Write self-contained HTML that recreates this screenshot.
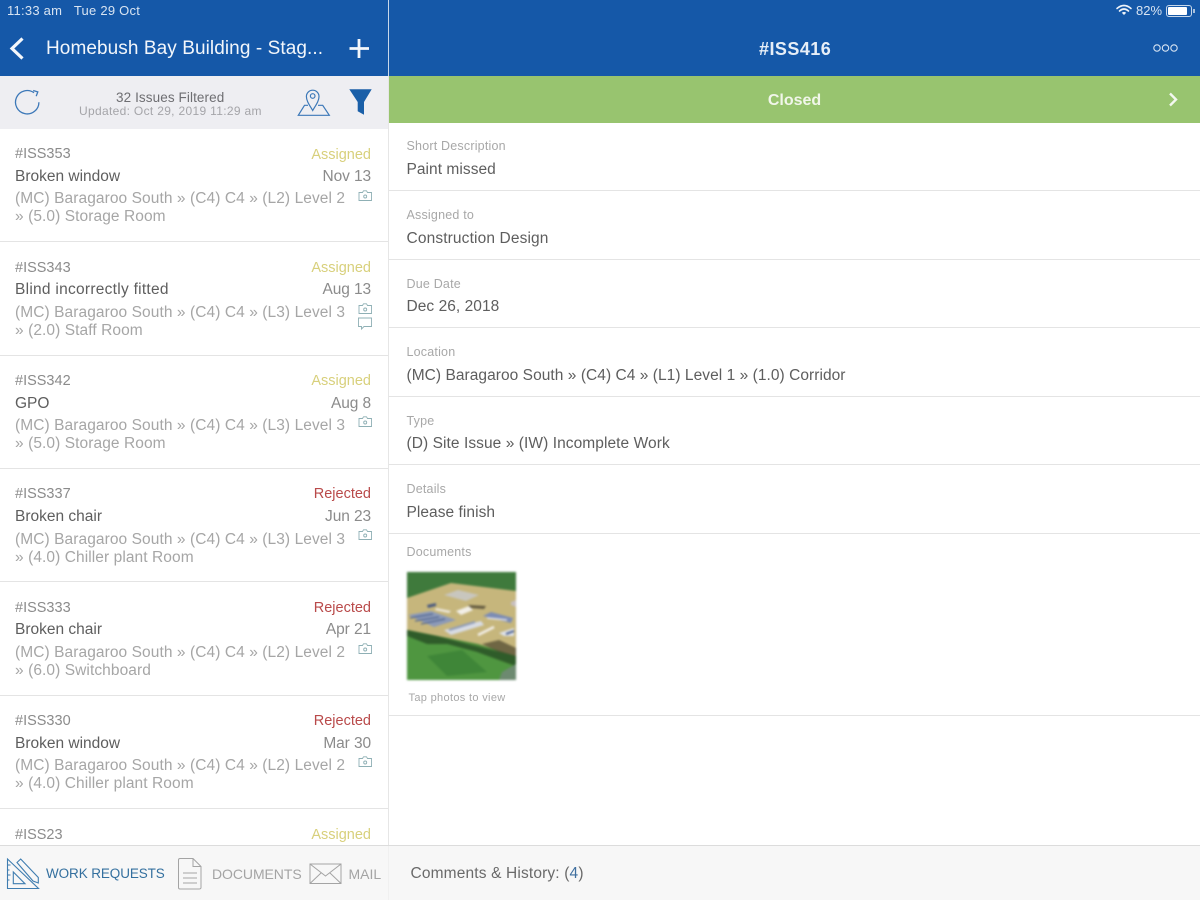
<!DOCTYPE html>
<html><head><meta charset="utf-8"><title>Issues</title>
<style>
*{margin:0;padding:0;box-sizing:border-box}
html,body{width:1200px;height:900px;overflow:hidden;background:#fff;font-family:"Liberation Sans",sans-serif}
.t{position:absolute;white-space:nowrap;line-height:20px}
.b{position:absolute;background:#e4e4e4;height:1px}
svg{position:absolute;overflow:visible}
.id{font-size:14.5px;color:#8b8b8b;left:15px}
.ti{font-size:15.5px;color:#5e5e5e;left:15px;margin-top:1px}
.dt{font-size:15.5px;color:#8b8b8b;right:829px;letter-spacing:-.1px;margin-top:1px}
.st{font-size:14.5px;right:829px}
.a{color:#d8d07c}.x{color:#b94a4a}
.lo{font-size:15.500px;color:#a6a6a6;left:15px;letter-spacing:.08px;margin-top:1px}
.lb{font-size:12.5px;color:#a8a8a8;left:406.5px;letter-spacing:.2px}
.v{font-size:15.5px;color:#5e5e5e;left:406.5px;letter-spacing:.05px;margin-top:1px}
</style></head><body>
<div style="position:absolute;left:0;top:0;width:1200px;height:76px;background:#1558a8"></div>
<div style="position:absolute;left:388px;top:0;width:1px;height:76px;background:#c8d8ea"></div>
<div style="position:absolute;left:0;top:76px;width:388px;height:53px;background:#eeeef2"></div>
<div style="position:absolute;left:389px;top:76px;width:811px;height:47px;background:#98c46f"></div>
<div style="position:absolute;left:388px;top:76px;width:1px;height:770px;background:#e6e6e6"></div>

<div class="t" style="left:7px;top:1px;font-size:13px;color:#d8e4f2;letter-spacing:.25px">11:33 am&nbsp;&nbsp;&nbsp;Tue 29 Oct</div>
<div class="t" style="left:46px;top:39px;font-size:19px;color:#f2f6fb;letter-spacing:.08px">Homebush Bay Building - Stag...</div>
<svg style="left:0;top:0" width="388" height="76" fill="none" stroke="#f4f7fb"><path d="M22.500 38.500L12 48.500L22.500 58.500" stroke-width="3.200"/><path d="M359 39V58M349.500 48.500H369" stroke-width="2.800"/></svg>
<div class="t" style="left:759px;top:38.500px;font-size:18px;font-weight:bold;color:#e6eef7;letter-spacing:.45px">#ISS416</div>
<svg style="left:1100px;top:0" width="100" height="76" fill="none" stroke="#d8e4f2" stroke-width="1.100"><circle cx="57" cy="48" r="3.200"/><circle cx="65.500" cy="48" r="3.200"/><circle cx="74" cy="48" r="3.200"/></svg>
<svg style="left:1116px;top:4px" width="16" height="13" fill="none" stroke="#eef3f9" stroke-linecap="round"><path d="M1 4.500Q8 -1.500 15 4.500" stroke-width="1.600"/><path d="M3.500 7Q8 3 12.500 7" stroke-width="1.600"/><path d="M8 11L5.800 8.800Q8 7 10.200 8.800Z" fill="#eef3f9" stroke="none"/></svg>
<div class="t" style="left:1136px;top:1px;font-size:13px;color:#d8e4f2">82%</div>
<div style="position:absolute;left:1166px;top:5px;width:26px;height:12px;border:1px solid #c8d8ea;border-radius:3px;padding:1px"><div style="width:19px;height:8px;background:#fff;border-radius:1px"></div></div>
<div style="position:absolute;left:1193px;top:9px;width:1.500px;height:4px;background:#a8c0dc"></div>

<div class="t" style="left:389px;width:811px;top:90.500px;font-size:16px;font-weight:bold;color:#f1f6ea;text-align:center">Closed</div>
<svg style="left:1165px;top:90px" width="16" height="20" fill="none" stroke="#f4f8f0" stroke-width="2.400"><path d="M5 3.500L11 9.500L5 15.500"/></svg>

<svg style="left:0;top:76px" width="388" height="53" fill="none">
<g transform="translate(.5,-.8)"><path d="M33.500 17.500A11.700 11.700 0 1 0 38.400 27" stroke="#3c78b8" stroke-width="1.300"/><path d="M32.700 15.300L37.300 16.700L35.700 21" stroke="#3c78b8" stroke-width="1.300"/></g>
<path d="M308 29.300H304.500L298.300 39.300H329.300L322.700 29.300H318" stroke="#3c78b8" stroke-width="1.200"/>
<path d="M312.700 34.500C309.500 29 306.400 25 306.400 20.500A6.300 6.300 0 0 1 319 20.500C319 25 315.900 29 312.700 34.500Z" stroke="#3c78b8" stroke-width="1.200" fill="#eeeef2"/><circle cx="312.700" cy="20" r="2.300" stroke="#3c78b8" stroke-width="1.200"/>
<path d="M349.300 13.300H371.700L364 26V38.700L357.700 35.300V26Z" fill="#1a5fa8"/></svg>
<div class="t" style="left:116px;top:88px;font-size:13.500px;color:#6e6e72;letter-spacing:.1px">32 Issues Filtered</div>
<div class="t" style="left:79px;top:101px;font-size:12px;color:#a5a5a9;letter-spacing:.32px">Updated: Oct 29, 2019 11:29 am</div>

<!-- list -->
<div class="t id" style="top:144px">#ISS353</div><div class="t st a" style="top:145px">Assigned</div>
<div class="t ti" style="top:166px">Broken window</div><div class="t dt" style="top:166px">Nov 13</div>
<div class="t lo" style="top:188px">(MC) Baragaroo South » (C4) C4 » (L2) Level 2</div><div class="t lo" style="top:206px">» (5.0) Storage Room</div>
<div class="b" style="left:0;top:241px;width:388px"></div>

<div class="t id" style="top:258px">#ISS343</div><div class="t st a" style="top:258px">Assigned</div>
<div class="t ti" style="top:279px;letter-spacing:.27px">Blind incorrectly fitted</div><div class="t dt" style="top:279px">Aug 13</div>
<div class="t lo" style="top:302px">(MC) Baragaroo South » (C4) C4 » (L3) Level 3</div><div class="t lo" style="top:320px">» (2.0) Staff Room</div>
<div class="b" style="left:0;top:355px;width:388px"></div>

<div class="t id" style="top:371px">#ISS342</div><div class="t st a" style="top:371px">Assigned</div>
<div class="t ti" style="top:393px">GPO</div><div class="t dt" style="top:393px">Aug 8</div>
<div class="t lo" style="top:415px">(MC) Baragaroo South » (C4) C4 » (L3) Level 3</div><div class="t lo" style="top:433px">» (5.0) Storage Room</div>
<div class="b" style="left:0;top:468px;width:388px"></div>

<div class="t id" style="top:484px">#ISS337</div><div class="t st x" style="top:484px">Rejected</div>
<div class="t ti" style="top:506px">Broken chair</div><div class="t dt" style="top:506px">Jun 23</div>
<div class="t lo" style="top:529px">(MC) Baragaroo South » (C4) C4 » (L3) Level 3</div><div class="t lo" style="top:547px">» (4.0) Chiller plant Room</div>
<div class="b" style="left:0;top:581px;width:388px"></div>

<div class="t id" style="top:598px">#ISS333</div><div class="t st x" style="top:598px">Rejected</div>
<div class="t ti" style="top:619px">Broken chair</div><div class="t dt" style="top:619px">Apr 21</div>
<div class="t lo" style="top:642px">(MC) Baragaroo South » (C4) C4 » (L2) Level 2</div><div class="t lo" style="top:660px">» (6.0) Switchboard</div>
<div class="b" style="left:0;top:695px;width:388px"></div>

<div class="t id" style="top:711px">#ISS330</div><div class="t st x" style="top:711px">Rejected</div>
<div class="t ti" style="top:733px">Broken window</div><div class="t dt" style="top:733px">Mar 30</div>
<div class="t lo" style="top:755px">(MC) Baragaroo South » (C4) C4 » (L2) Level 2</div><div class="t lo" style="top:773px">» (4.0) Chiller plant Room</div>
<div class="b" style="left:0;top:808px;width:388px"></div>

<div class="t id" style="top:825px">#ISS23</div><div class="t st a" style="top:825px">Assigned</div>

<svg width="0" height="0"><defs><g id="cam" fill="none" stroke="#8fb0b5" stroke-width=".9"><path d="M1 2.500H4.500L5.500 .8H8.500L9.500 2.500H13.500V10.500H1Z"/><circle cx="7.200" cy="6.500" r="1.500"/></g></defs></svg>
<svg style="left:358px;top:190px" width="14" height="12"><use href="#cam"/></svg>
<svg style="left:358px;top:303px" width="14" height="12"><use href="#cam"/></svg>
<svg style="left:358px;top:317px" width="14" height="14" fill="none" stroke="#8fb0b5" stroke-width=".9"><path d="M.5 1H13.500V9.500H6L3.500 12V9.500H.5Z"/></svg>
<svg style="left:358px;top:416px" width="14" height="12"><use href="#cam"/></svg>
<svg style="left:358px;top:529px" width="14" height="12"><use href="#cam"/></svg>
<svg style="left:358px;top:643px" width="14" height="12"><use href="#cam"/></svg>
<svg style="left:358px;top:756px" width="14" height="12"><use href="#cam"/></svg>

<!-- detail -->
<div class="t lb" style="top:136px">Short Description</div><div class="t v" style="top:159px">Paint missed</div><div class="b" style="left:389px;top:190px;width:811px"></div>
<div class="t lb" style="top:205px">Assigned to</div><div class="t v" style="top:228px;letter-spacing:.13px">Construction Design</div><div class="b" style="left:389px;top:259px;width:811px"></div>
<div class="t lb" style="top:274px">Due Date</div><div class="t v" style="top:296px">Dec 26, 2018</div><div class="b" style="left:389px;top:327px;width:811px"></div>
<div class="t lb" style="top:342px">Location</div><div class="t v" style="top:365px">(MC) Baragaroo South » (C4) C4 » (L1) Level 1 » (1.0) Corridor</div><div class="b" style="left:389px;top:396px;width:811px"></div>
<div class="t lb" style="top:411px">Type</div><div class="t v" style="top:433px;letter-spacing:.07px">(D) Site Issue » (IW) Incomplete Work</div><div class="b" style="left:389px;top:464px;width:811px"></div>
<div class="t lb" style="top:479px">Details</div><div class="t v" style="top:502px">Please finish</div><div class="b" style="left:389px;top:533px;width:811px"></div>
<div class="t lb" style="top:542px">Documents</div>

<svg style="left:407px;top:572px;filter:blur(1px)" width="109" height="108" viewBox="0 0 109 108">
<defs><clipPath id="c"><rect width="109" height="108"/></clipPath></defs>
<g clip-path="url(#c)">
<rect width="109" height="108" fill="#4c8a3a"/>
<path d="M0 0H109V20L44 11L0 26Z" fill="#3f7a3c"/>
<path d="M0 26L44 11L109 19V84L71 72L1 58H0Z" fill="#c6b67c"/>
<path d="M0 58L30 64L60 72L109 84V94L70 80L40 72L20 72L0 64Z" fill="#2f5c2a"/>
<path d="M40 72L70 80L109 95V108H0V64L20 72Z" fill="#4f9640"/>
<path d="M20 84L55 78L80 100L40 104Z" fill="#3f8638"/>
<path d="M95 100L109 92V108H92Z" fill="#6d8a70"/>
<path d="M1 43L24 39L49 48L27 55Z" fill="#8c9ab8"/>
<path d="M3 46L26 42M8 49L32 45M14 52L38 47" stroke="#4f648e" stroke-width="1.300" fill="none"/>
<path d="M37 58L74 49L77 53L44 63Z" fill="#d8dce4"/>
<path d="M42 58L68 50" stroke="#8c9ab8" stroke-width="2"/>
<path d="M71 63L87 55" stroke="#f2efe8" stroke-width="2.600"/>
<path d="M76 44L84 40L106 46L104 51Z" fill="#7c8cb4"/>
<path d="M80 46L100 48" stroke="#e6e6ee" stroke-width="1.500"/>
<path d="M92 61L107 56V64L97 64Z" fill="#dfe3ea"/>
<path d="M99 62L107 59" stroke="#43598c" stroke-width="2"/>
<path d="M37 23L51 18L72 23L59 29Z" fill="#c8c6be"/>
<path d="M29 36L44 39L42 41L28 38Z" fill="#eeeae0"/>
<path d="M49 39L62 34L66 38L54 43Z" fill="#f2efe8"/>
<path d="M61 33L79 34L77 37L64 36Z" fill="#3a3426" opacity=".7"/>
<path d="M20 33L29 31L29 34L21 36Z" fill="#4a5a80"/>
<path d="M104 30L109 28V35L104 33Z" fill="#c8c0c0"/>
<path d="M75 72L92 68L109 76V84L92 80Z" fill="#4a442c" opacity=".7"/>
</g></svg>
<div class="t" style="left:408.500px;top:688px;font-size:11px;color:#a8a8a8;letter-spacing:.33px">Tap photos to view</div>
<div class="b" style="left:389px;top:715px;width:811px"></div>

<!-- bottom -->
<div style="position:absolute;left:0;top:845px;width:1200px;height:55px;background:#f7f7f7;border-top:1px solid #dcdcdc"></div>
<div style="position:absolute;left:388px;top:846px;width:1px;height:54px;background:#f0f0f0"></div>
<svg style="left:0;top:855px" width="390" height="40" fill="none">
<g stroke="#3f7db0" stroke-width="1.100"><path d="M7.500 4V33.500H38.500Z"/><path d="M13.300 17V28.700H25Z"/><path d="M7.500 10H10.500M7.500 15H9.500M7.500 20H10.500M7.500 25H9.500"/><path d="M17 7.500L20.700 4L38.300 22.500V28L33 26Z"/></g>
<g stroke="#a4a4a4" stroke-width="1"><path d="M178.500 5Q178.500 3.500 180 3.500H193L201 11.500V32.500Q201 34 199 34H180Q178.500 34 178.500 32.500Z"/><path d="M193 3.500V11.500H201"/><path d="M183 18H197M183 23H197M183 28H197"/></g>
<g stroke="#a4a4a4" stroke-width="1"><path d="M310 9H341V28.500H310Z"/><path d="M310 9L325.500 21L341 9M310 28.500L321 18M341 28.500L330 18"/></g></svg>
<div class="t" style="left:46px;top:864px;font-size:13.500px;color:#34709f;letter-spacing:-.1px">WORK REQUESTS</div>
<div class="t" style="left:212px;top:864px;font-size:14px;color:#a4a4a4;letter-spacing:-.07px">DOCUMENTS</div>
<div class="t" style="left:348.500px;top:864px;font-size:14px;color:#a4a4a4;letter-spacing:0">MAIL</div>
<div class="t" style="left:410.500px;top:863.500px;font-size:15.500px;color:#6a6a6a;letter-spacing:.15px">Comments &amp; History: (<span style="color:#3f6f9f">4</span>)</div>
</body></html>
